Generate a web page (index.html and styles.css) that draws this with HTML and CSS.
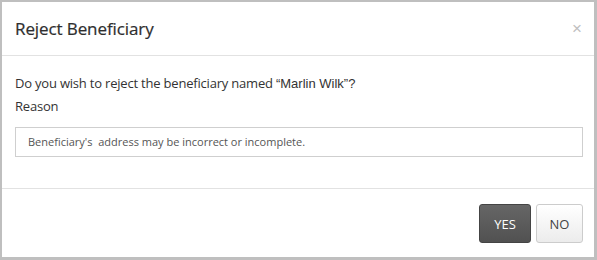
FILE: index.html
```html
<!DOCTYPE html>
<html>
<head>
<meta charset="utf-8">
<link rel="stylesheet" href="styles.css">
</head>
<body>
<div class="modal">
  <div class="modal-header">
    <h4 class="modal-title">Reject Beneficiary</h4>
    <span class="close">&times;</span>
  </div>
  <div class="modal-body">
    <p class="question">Do you wish to reject the beneficiary named <span class="name">“Marlin Wilk”?</span></p>
    <label class="label">Reason</label>
    <div class="input">Beneficiary's&nbsp; address may be incorrect or incomplete.</div>
  </div>
  <div class="modal-footer">
    <button class="btn btn-yes">YES</button>
    <button class="btn btn-no">NO</button>
  </div>
</div>
</body>
</html>
```
FILE: styles.css
```css
html, body {
  margin: 0;
  padding: 0;
  background: #fff;
}
.modal {
  width: 597px;
  height: 260px;
  box-sizing: border-box;
  border-style: solid;
  border-color: #bfbfbf;
  border-width: 2px 3px 3px 2px;
  font-family: "Open Sans", sans-serif;
  color: #333;
  display: flex;
  flex-direction: column;
}
.modal-header {
  height: 54px;
  box-sizing: border-box;
  border-bottom: 1px solid #e2e2e2;
  display: flex;
  align-items: center;
  justify-content: space-between;
  padding: 0 12px 0 13px;
}
.modal-title {
  margin: 0;
  font-size: 17px;
  font-weight: 500;
  color: #2e2e2e;
  letter-spacing: -0.1px;
  -webkit-text-stroke: 0.2px #2e2e2e;
}
.close {
  font-family: "Liberation Sans", sans-serif;
  font-size: 17px;
  color: #c0c0c0;
  line-height: 1;
}
.modal-body {
  height: 133px;
  box-sizing: border-box;
  border-bottom: 1px solid #e2e2e2;
  padding: 18px 11px 0 13px;
}
.question {
  margin: 0;
  font-size: 13px;
  line-height: 18px;
  letter-spacing: -0.2px;
}
.name {
  font-family: "Liberation Sans", sans-serif;
  letter-spacing: 0;
}
.label {
  display: block;
  margin-top: 4px;
  font-size: 13px;
  line-height: 18px;
  letter-spacing: -0.2px;
}
.input {
  margin-top: 12px;
  height: 30px;
  box-sizing: border-box;
  border: 1px solid #cfcfcf;
  padding: 0 12px;
  font-size: 11px;
  line-height: 28px;
  color: #555;
  letter-spacing: 0;
}
.modal-footer {
  flex: 1;
  display: flex;
  justify-content: flex-end;
  align-items: flex-start;
  gap: 5px;
  padding: 15px 11px 0 0;
}
.btn {
  height: 39px;
  box-sizing: border-box;
  border-radius: 3px;
  font-family: "Open Sans", sans-serif;
  font-size: 13px;
  padding: 0;
  cursor: pointer;
}
.btn-yes {
  width: 52px;
  background: linear-gradient(#666, #515151);
  border: 1px solid #444;
  color: #fff;
}
.btn-no {
  width: 47px;
  background: linear-gradient(#fff, #ececec);
  border: 1px solid #ccc;
  color: #444;
}
```
